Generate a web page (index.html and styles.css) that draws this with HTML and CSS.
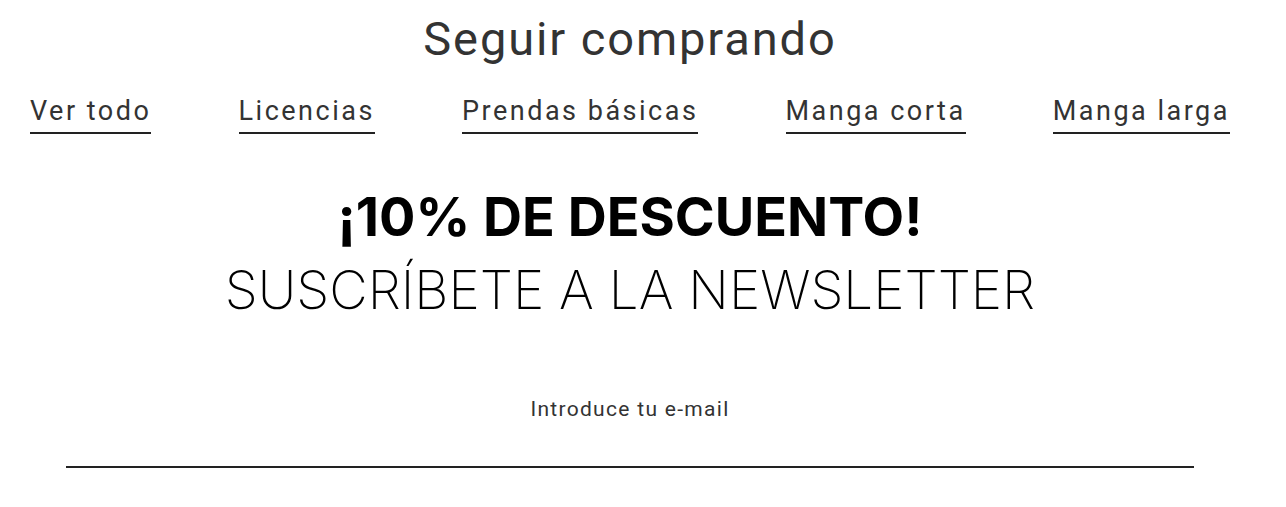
FILE: index.html
```html
<!DOCTYPE html>
<html lang="es">
<head>
<meta charset="utf-8">
<title>Seguir comprando</title>
<link rel="stylesheet" href="styles.css">
</head>
<body>
<main class="page">
  <section class="shop">
    <h2 class="shop-title">Seguir comprando</h2>
    <nav class="shop-links">
      <a href="#" class="shop-link">Ver todo</a>
      <a href="#" class="shop-link">Licencias</a>
      <a href="#" class="shop-link">Prendas básicas</a>
      <a href="#" class="shop-link">Manga corta</a>
      <a href="#" class="shop-link">Manga larga</a>
    </nav>
  </section>
  <section class="newsletter">
    <h2 class="nl-title">
      <span class="nl-strong">¡10% DE DESCUENTO!</span>
      <span class="nl-light">SUSCRÍBETE A LA NEWSLETTER</span>
    </h2>
    <div class="nl-field">
      <span class="nl-placeholder">Introduce tu e-mail</span>
    </div>
  </section>
</main>
</body>
</html>
```
FILE: styles.css
```css
* { box-sizing: border-box; }
html, body { margin: 0; padding: 0; background: #fff; }
body { font-family: Roboto, "Liberation Sans", sans-serif; color: #333; }
.page { width: 1260px; padding-top: 12px; }
.shop-title {
  margin: 0;
  text-align: center;
  font-weight: 400;
  font-size: 47px;
  line-height: 54px;
  color: #333;
  letter-spacing: 1.9px;
}
.shop-links {
  display: flex;
  justify-content: space-between;
  padding: 0 30px;
  margin-top: 30px;
}
.shop-link {
  font-size: 27px;
  line-height: 30px;
  letter-spacing: 2.5px;
  color: #333;
  text-decoration: none;
  padding-bottom: 6px;
  border-bottom: 2px solid #222;
}
.newsletter { margin-top: 52px; }
.nl-title {
  margin: 0;
  text-align: center;
  font-family: Inter, "Liberation Sans", sans-serif;
  color: #000;
}
.nl-strong {
  display: block;
  font-weight: 700;
  font-size: 54px;
  line-height: 62px;
  letter-spacing: 0;
}
.nl-light {
  display: block;
  margin-top: 11px;
  font-weight: 200;
  font-size: 53px;
  line-height: 62px;
  letter-spacing: 0;
}
.nl-field {
  margin: 76px 66px 0;
  padding-bottom: 44px;
  border-bottom: 2px solid #222;
  text-align: center;
}
.nl-placeholder {
  display: block;
  font-size: 21px;
  line-height: 25px;
  letter-spacing: 1.3px;
  color: #333;
}
```
